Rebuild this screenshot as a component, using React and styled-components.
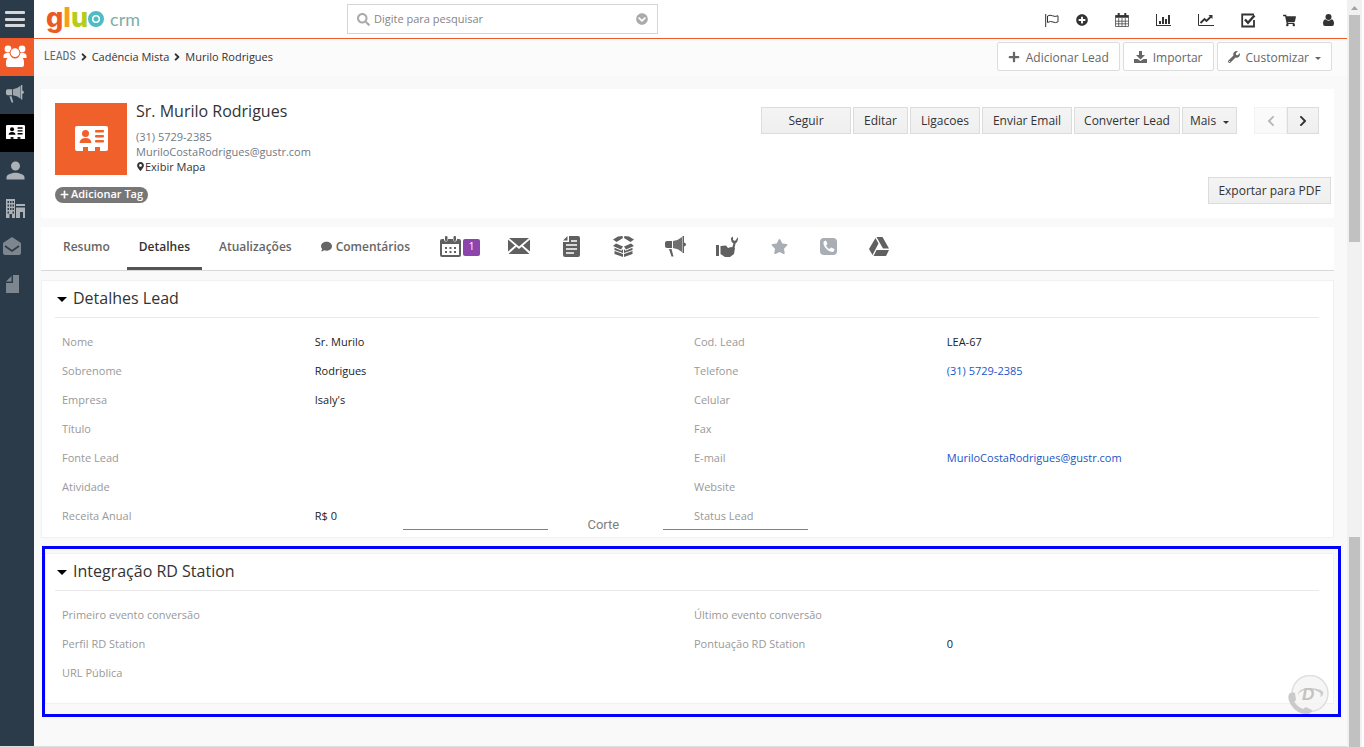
import React from 'react';
import styled, { createGlobalStyle } from 'styled-components';
import {
  FaPlus,
  FaPlusCircle,
  FaShoppingCart,
  FaSearch,
  FaChevronCircleDown,
  FaChevronLeft,
  FaChevronRight,
  FaAngleRight,
  FaWrench,
  FaMapMarkerAlt,
  FaComment,
  FaStar,
} from 'react-icons/fa';
import { MdPerson } from 'react-icons/md';

const GlobalStyle = createGlobalStyle`
  * { box-sizing: border-box; }
  body {
    margin: 0;
    background: #f9f9f9;
    color: #333;
    font-family: "Open Sans", "Noto Sans", sans-serif;
    font-size: 11px;
    line-height: 15px;
  }
  button, input { font-family: inherit; }
  a { color: inherit; text-decoration: none; }
  svg { display: block; flex: none; }
`;

const Page = styled.div`
  display: flex;
  min-height: 100vh;
`;

const Sidebar = styled.nav`
  flex: none;
  width: 34px;
  background: #2c3b49;
  border-bottom: 1px solid #ddd;
`;

const SideItem = styled.a`
  display: flex;
  align-items: center;
  justify-content: ${(p) => (p.$left ? 'flex-start' : 'center')};
  height: 38px;
  padding: 0 4px 2px ${(p) => (p.$left ? '3px' : '0')};
  background: ${(p) => p.$bg || 'transparent'};
  color: ${(p) => p.$color || '#abb1b7'};
`;

const MenuButton = styled.button`
  display: flex;
  align-items: center;
  width: 34px;
  height: 38px;
  padding: 0 0 0 5px;
  border: 0;
  background: transparent;
  color: #d5d8db;
`;

const Main = styled.main`
  flex: 1;
  min-width: 0;
  border-bottom: 1px solid #ddd;
`;

const Header = styled.header`
  display: grid;
  grid-template-columns: 313px minmax(200px, 311px) 1fr;
  align-items: center;
  height: 39px;
  background: #fff;
  border-bottom: 1px solid #f05a28;
`;

const Logo = styled.a`
  display: flex;
  align-items: center;
  padding-left: 12px;
  height: 38px;
`;

const LogoWord = styled.span`
  padding-bottom: 3px;
  font-family: Inter, "Liberation Sans", sans-serif;
  font-size: 27px;
  font-weight: 800;
  line-height: 32px;
  color: #ec5a24;
`;

const LogoLetter = styled.span`
  color: ${(p) => p.$color};
`;

const LogoRing = styled.span`
  flex: none;
  width: 16px;
  height: 16px;
  border: 4px solid #4dbcc4;
  border-radius: 50%;
  background: radial-gradient(#4dbcc4 2px, #fff 3px);
`;

const LogoSub = styled.span`
  margin-left: 6px;
  font-family: Lato, sans-serif;
  font-size: 18px;
  font-weight: 400;
  line-height: 34px;
  color: #7fada7;
`;

const SearchBox = styled.label`
  display: flex;
  align-items: center;
  height: 30px;
  padding: 0 9px;
  border: 1px solid #d5d5d5;
  color: #aaa;
`;

const SearchInput = styled.input`
  flex: 1;
  min-width: 0;
  padding: 0 4px 2px;
  border: 0;
  outline: 0;
  background: transparent;
  font-size: 11px;
  &::placeholder { color: #858585; opacity: 1; }
`;

const HeaderIcons = styled.div`
  display: flex;
  align-items: center;
  justify-content: flex-end;
  gap: 27px;
  padding: 2px 13px 0 0;
`;

const IconGroup = styled.div`
  display: flex;
  align-items: center;
  gap: 17px;
`;

const IconButton = styled.button`
  display: flex;
  padding: 0;
  border: 0;
  background: transparent;
  color: #333;
`;

const SubHeader = styled.div`
  display: flex;
  align-items: flex-start;
  justify-content: space-between;
  height: 37px;
  padding: 3px 15px 0 10px;
  background: #fbfbfb;
`;

const Crumbs = styled.div`
  display: flex;
  align-items: center;
  gap: 2px;
  height: 29px;
`;

const Module = styled.a`
  font-family: "Roboto Condensed", Roboto, sans-serif;
  font-size: 12px;
  color: #5b6875;
`;

const ToolButtons = styled.div`
  display: flex;
  gap: 3px;
`;

const ToolButton = styled.button`
  display: flex;
  align-items: center;
  gap: 6px;
  height: 29px;
  padding: 1px 10px 0;
  border: 1px solid #ddd;
  border-radius: 2px;
  background: #fff;
  color: #666;
  font-size: 12px;
`;

const Caret = styled.span`
  margin-top: 3px;
  border: solid transparent;
  border-width: ${(p) => (p.$big ? '5px 5px 0' : '3px 3px 0')};
  border-top-color: ${(p) => p.$color || '#333'};
`;

const Content = styled.div`
  padding: 13px 0 0 7px;
`;

const Card = styled.section`
  display: flex;
  justify-content: space-between;
  height: 129px;
  margin-right: 13px;
  padding: 14px 3px 0 14px;
  background: #fff;
`;

const Identity = styled.div`
  display: flex;
  gap: 9px;
`;

const Avatar = styled.div`
  display: flex;
  align-items: center;
  justify-content: center;
  width: 72px;
  height: 72px;
  padding-bottom: 2px;
  background: #f0602a;
  color: #fff;
`;

const Name = styled.h1`
  margin: 0 0 10px;
  font-size: 16px;
  font-weight: 400;
  line-height: 16px;
`;

const Contact = styled.a`
  display: flex;
  align-items: center;
  color: ${(p) => (p.$dark ? '#333' : '#6f7a85')};
`;

const TagButton = styled.button`
  display: flex;
  align-items: center;
  gap: 2px;
  height: 16px;
  margin-top: 12px;
  padding: 0 5px 2px;
  border: 0;
  border-radius: 8px;
  background: #777;
  color: #fff;
  font-size: 11px;
  font-weight: 600;
  line-height: 14px;
`;

const Actions = styled.div`
  display: flex;
  flex-direction: column;
  align-items: flex-end;
  gap: 43px;
  padding-top: 4px;
`;

const ActionRow = styled.div`
  display: flex;
  gap: 2px;
  padding-right: 12px;
`;

const ActionButton = styled.button`
  display: flex;
  align-items: center;
  justify-content: center;
  gap: 7px;
  width: ${(p) => p.$w}px;
  height: 27px;
  padding: 0;
  border: 1px solid #dcdcdc;
  background: linear-gradient(#f4f4f4, #efefef);
  color: #333;
  font-size: 12px;
  white-space: nowrap;
  &:disabled { opacity: 0.35; }
`;

const Pager = styled.div`
  display: flex;
  margin-left: 15px;
`;

const TabBar = styled.div`
  display: flex;
  height: 44px;
  margin: 9px 13px 9px 0;
  padding-left: 10px;
  border-bottom: 1px solid #d8d8d8;
  background: #fff;
`;

const Tab = styled.a`
  display: flex;
  align-items: center;
  gap: 4px;
  height: 43px;
  margin-right: 5px;
  padding: 0 12px 4px;
  color: ${(p) => (p.$active ? '#333' : '#666')};
  font-size: 12px;
  font-weight: 600;
  box-shadow: ${(p) => (p.$active ? 'inset 0 -3px #555' : 'none')};
`;

const IconTab = styled.a`
  display: flex;
  align-items: center;
  justify-content: center;
  gap: 2px;
  width: ${(p) => p.$w || 52}px;
  height: 38px;
  color: ${(p) => (p.$muted ? '#a9aeb4' : '#606060')};
`;

const Badge = styled.span`
  width: 17px;
  height: 17px;
  margin-top: 2px;
  border-radius: 2px;
  background: #8e44ad;
  color: #fff;
  font-size: 10px;
  line-height: 14px;
  text-align: center;
`;

const Panel = styled.section`
  position: relative;
  margin-right: ${(p) => (p.$flush ? '0' : '13px')};
  padding: 0 14px ${(p) => (p.$flush ? '16px' : '7px')} ${(p) => (p.$flush ? '9px' : '13px')};
  border: 1px solid #f1f1f1;
  background: #fff;
`;

const PanelTitle = styled.h2`
  display: flex;
  align-items: center;
  gap: 6px;
  height: 37px;
  margin: 0 0 9px;
  padding: 0 0 2px 2px;
  border-bottom: 1px solid #eaeaea;
  font-size: 16px;
  font-weight: 400;
`;

const Fields = styled.table`
  width: 100%;
  table-layout: fixed;
  border-collapse: collapse;
`;

const Label = styled.th`
  width: 20%;
  height: 29px;
  padding: 0 7px;
  color: #999;
  font-weight: 400;
  text-align: left;
`;

const Value = styled.td`
  width: 30%;
  padding: 0 7px;
  color: #222;
`;

const ValueLink = styled.a`
  color: #1a55c8;
`;

const CutMark = styled.div`
  position: absolute;
  bottom: 7px;
  left: 28%;
  display: flex;
  align-items: flex-end;
  gap: 39px;
  color: #808080;
  font-family: Roboto, sans-serif;
  font-size: 13px;
  line-height: 10px;
`;

const CutLabel = styled.span`
  width: 37px;
`;

const CutLine = styled.span`
  width: 145px;
  border-bottom: 1px solid #808080;
`;

const Highlight = styled.div`
  position: relative;
  margin: 8px 6px 29px 1px;
  padding: 4px 4px 10px 0;
  border: 3px solid #0000ff;
`;

const CallWidget = styled.a`
  position: absolute;
  right: 8px;
  bottom: 0;
`;

const Scrollbar = styled.div`
  display: flex;
  flex: none;
  flex-direction: column;
  width: 17px;
  padding: 0 2px;
  border-right: 2px solid #fff;
  background: #f1f1f1;
`;

const ScrollArrow = styled.div`
  width: 7px;
  height: 15px;
  padding-top: 6px;
  margin: 0 2px;
`;

const ScrollPart = styled.div`
  flex: ${(p) => p.$size} 0 0;
  background: ${(p) => (p.$thumb ? '#c1c1c1' : 'transparent')};
`;

const MenuIcon = () => (
  <svg width="20" height="17" viewBox="0 0 20 17" fill="currentColor">
    <rect y="0" width="20" height="3" rx="1" />
    <rect y="7" width="20" height="3" rx="1" />
    <rect y="13" width="20" height="3" rx="1" />
  </svg>
);

const GroupIcon = () => (
  <svg width="24" height="22" viewBox="0 0 24 22" fill="currentColor">
    <circle cx="5" cy="4" r="3.4" />
    <circle cx="19" cy="4" r="3.4" />
    <path d="M0.5 13V10.5Q1 8 4 8H7L9 13ZM23.5 13V10.5Q23 8 20 8H17L15 13Z" />
    <circle cx="12" cy="7.7" r="5.4" fill="#f05a28" />
    <circle cx="12" cy="7.7" r="4.4" />
    <path d="M3 22V17Q3 12 8 12Q12 15 16 12Q21 12 21 17V20Q21 22 19 22H5Q3 22 3 20Z" />
  </svg>
);

const HornIcon = ({ size = 21 }) => (
  <svg width={size} height={size} viewBox="0 0 21 21" fill="currentColor">
    <path d="M2 5H7V12H2Q0 12 0 10V7Q0 5 2 5Z" />
    <path d="M8 5Q13 4.500 17 1V16Q13 12.500 8 12Z" opacity="0.9" />
    <path d="M17.500 0H19V6.500Q21 7 21 8.500T19 10.500V17H17.500Z" />
    <path d="M4 13H6.500L8.500 20.500H6.500Z" />
  </svg>
);

const ContactIcon = ({ width, hole }) => (
  <svg width={width} viewBox="0 0 33 25" fill="currentColor">
    <path d="M2 0H31Q33 0 33 2V23Q33 25 31 25H25V23H20V25H13V23H8V25H2Q0 25 0 23V2Q0 0 2 0Z" />
    <g fill={hole}>
      <circle cx="10.500" cy="7.500" r="3.500" />
      <path d="M4.500 17Q5 12 10.500 12T16.500 17Z" />
      <rect x="20" y="4" width="9" height="2.500" rx="1" />
      <rect x="20" y="9" width="9" height="2.500" rx="1" />
      <rect x="20" y="14" width="9" height="2.500" rx="1" />
      <rect x="8" y="21" width="5" height="2" />
      <rect x="20" y="21" width="5" height="2" />
    </g>
  </svg>
);

const BuildingIcon = () => (
  <svg width="19" height="19" viewBox="0 0 19 19" fill="currentColor">
    <path
      fillRule="evenodd"
      d="M0 0H9V19H6V15H3.500V19H0ZM1.500 2V4H3V2ZM4 2V4H5.500V2ZM6.500 2V4H8V2ZM1.500 5.500V7.500H3V5.500ZM4 5.500V7.500H5.500V5.500ZM6.500 5.500V7.500H8V5.500ZM1.500 9V11H3V9ZM4 9V11H5.500V9ZM6.500 9V11H8V9ZM1.500 12.500V14.500H3V12.500ZM6.500 12.500V14.500H8V12.500Z"
    />
    <path d="M10 5H19V7H10ZM10 8.500H19V19H17V13H14V19H10Z" />
  </svg>
);

const OpenMailIcon = () => (
  <svg width="18" height="18" viewBox="0 0 18 18" fill="none">
    <path d="M9 0L18 6V16Q18 18 16 18H2Q0 18 0 16V6Z" fill="#7d868f" />
    <path d="M2 9L9 14L16 9" stroke="#2c3b49" strokeWidth="1.600" />
  </svg>
);

const FileIcon = () => (
  <svg width="19" height="18" viewBox="0 0 19 18" fill="#7d868f">
    <path d="M7 0H13V18H0V8H7ZM5.500 1V6.500H0Z" />
  </svg>
);

const FlagIcon = () => (
  <svg width="14" height="13" viewBox="0 0 14 13" fill="none" stroke="currentColor">
    <path d="M0.700 0V13" />
    <path d="M2.500 2Q5 0.500 7.500 1.800T13 1.800V7.800Q10.500 9.300 8 8T2.500 8.500Z" />
  </svg>
);

const CalendarIcon = () => (
  <svg width="14" height="14" viewBox="0 0 14 14" fill="none" stroke="currentColor">
    <path d="M0.500 2.500H13.500V13.500H0.500ZM0.500 8.200H13.500M0.500 10.800H13.500M3.700 5V13.500M7 5V13.500M10.300 5V13.500" strokeWidth="0.700" />
    <path d="M0.500 3.500H13.500" strokeWidth="2.500" />
    <path d="M3.700 0V3.500M10.300 0V3.500" strokeWidth="2" />
  </svg>
);

const BarChartIcon = () => (
  <svg width="15" height="12" viewBox="0 0 15 12" fill="currentColor">
    <path d="M0 0H1V11H15V12H0ZM3 7H5V10H3ZM6 3H8V10H6ZM9 5H11V10H9ZM12 1H14V10H12Z" />
  </svg>
);

const LineChartIcon = () => (
  <svg width="16" height="12" viewBox="0 0 16 12" fill="none" stroke="currentColor">
    <path d="M0.500 0V11.500H16" />
    <path d="M2.500 9L6.500 5L8.500 7L13 2.500" strokeWidth="1.900" />
    <path d="M10.500 1H14.500V5Z" fill="currentColor" stroke="none" />
  </svg>
);

const CheckIcon = () => (
  <svg width="15" height="15" viewBox="0 0 15 15" fill="none" stroke="currentColor">
    <path d="M13 7V13.500H1.200V1.500H13" strokeWidth="1.800" />
    <path d="M4 6.500L7 9.800L13.500 2.500" strokeWidth="2.400" />
  </svg>
);

const UserIcon = () => (
  <svg width="11" height="12" viewBox="0 0 11 12" fill="currentColor">
    <circle cx="5.500" cy="3" r="3" />
    <path d="M2.300 5.300Q5.500 8 8.700 5.300Q11 6 11 9.500Q11 12 9 12H2Q0 12 0 9.500Q0 6 2.300 5.300Z" />
  </svg>
);

const ImportIcon = () => (
  <svg width="13" height="12" viewBox="0 0 13 12" fill="currentColor">
    <path d="M5 0H8V4H11L6.500 8.500L2 4H5Z" />
    <path d="M0 8H3.500L6.500 10L9.500 8H13V12H0Z" />
  </svg>
);

const EventIcon = () => (
  <svg width="21" height="21" viewBox="0 0 21 21">
    <path d="M2 3H19Q21 3 21 5V19Q21 21 19 21H2Q0 21 0 19V5Q0 3 2 3Z" fill="currentColor" />
    <path d="M2 8H19V19H2Z" fill="#fff" />
    <path d="M4 0H8V4Q6 7 4 4ZM13 0H17V4Q15 7 13 4Z" fill="#fff" />
    <rect x="5" y="0" width="2.500" height="5" rx="1" fill="currentColor" />
    <rect x="13.500" y="0" width="2.500" height="5" rx="1" fill="currentColor" />
    <path d="M5 11H7V13H5ZM9.500 11H11.500V13H9.500ZM14 11H16V13H14ZM5 15H7V17H5ZM9.500 15H11.500V17H9.500ZM14 15H16V17H14Z" fill="currentColor" />
  </svg>
);

const MailIcon = () => (
  <svg width="22" height="16" viewBox="0 0 22 16" fill="currentColor">
    <path d="M1 0H21L11 8.500ZM0 1.500L7 7.500L0 13.500ZM22 1.500V13.500L15 7.500ZM0.500 16L8.300 8.800L11 11L13.700 8.800L21.500 16Z" />
  </svg>
);

const DocIcon = () => (
  <svg width="17" height="21" viewBox="0 0 17 21">
    <path d="M6 0H15Q17 0 17 2V19Q17 21 15 21H2Q0 21 0 19V6H6ZM4.500 0V4.500H0Z" fill="currentColor" />
    <path d="M8 5H14M3 9H14M3 13H14M3 17H11" stroke="#fff" strokeWidth="1.700" />
  </svg>
);

const BoxIcon = () => (
  <svg width="21" height="21" viewBox="0 0 21 21" fill="currentColor">
    <path d="M5 0.500L9.500 0L10 2L3.500 6L0 3.500ZM16 0.500L11.500 0L11 2L17.500 6L21 3.500ZM3 7.500L10 10.500L8 13.500L0 10ZM18 7.500L11 10.500L13 13.500L21 10Z" />
    <path d="M1.500 11.800L8.500 14.800L10 13V17L1.500 14ZM19.500 11.800L12.500 14.800L11 13V17L19.500 14ZM1.500 15L10 18V21L1.500 18ZM19.500 15L11 18V21L19.500 18Z" />
  </svg>
);

const ServiceIcon = () => (
  <svg width="22" height="21" viewBox="0 0 22 21" fill="currentColor">
    <path d="M0 9H3V20H0ZM4.500 10L10 9.500L12 12L15 11L19 12L18 18L14 21H9L4.500 18Z" />
    <path d="M16 12L17.500 7.500Q14.500 5.500 15 2L17 0.500V4L19 5L21 2.500L22 1Q22.500 5 19.500 7.500L18.500 12Z" />
  </svg>
);

const PhoneIcon = () => (
  <svg width="17" height="17" viewBox="0 0 17 17">
    <rect width="17" height="17" rx="4" fill="currentColor" />
    <path d="M3.500 4Q4.500 2.500 6 2.500L7.500 6L6 7.500Q7 10 9.500 11L11 9.500L14.500 11Q14.500 13 13 14Q10 14.700 6.500 11T3.500 4Z" fill="#fff" />
  </svg>
);

const DriveIcon = () => (
  <svg width="20" height="19" viewBox="0 0 20 19" fill="currentColor">
    <path d="M6.500 1L9.500 6.500L3.500 18L0 12ZM7.500 0H13.500L20 11.500H14ZM7.500 13H20L17 19H4.500Z" />
  </svg>
);

const CallIcon = () => (
  <svg width="42" height="39" viewBox="0 0 42 39">
    <circle cx="22" cy="18.500" r="18" fill="#f4f4f4" fillOpacity="0.800" stroke="#dedede" strokeWidth="1.500" />
    <path d="M10 20Q10 13 23 13Q35 14 35.500 18Q35 21 32 22Q34 19 31 17Q27 14 20 14.500Q12 15 10 20Z" fill="#cccccc" />
    <text x="14" y="25" fill="#c2c2c2" fontFamily="Liberation Sans, sans-serif" fontSize="17" fontWeight="700" fontStyle="italic">D</text>
    <path d="M1 19Q4 16 7 18L8 25L6 27Q9 32 15 34L18 32L24 35Q24 38 19 39Q9 39 3 30Q-1 24 1 19Z" fill="#cacaca" />
  </svg>
);

const leadRows = [
  ['Nome', 'Sr. Murilo', 'Cod. Lead', 'LEA-67'],
  ['Sobrenome', 'Rodrigues', 'Telefone', <ValueLink href="tel:3157292385">(31) 5729-2385</ValueLink>],
  ['Empresa', "Isaly's", 'Celular', ''],
  ['Título', '', 'Fax', ''],
  ['Fonte Lead', '', 'E-mail', <ValueLink href="mailto:MuriloCostaRodrigues@gustr.com">MuriloCostaRodrigues@gustr.com</ValueLink>],
  ['Atividade', '', 'Website', ''],
  ['Receita Anual', 'R$ 0', 'Status Lead', ''],
];

const stationRows = [
  ['Primeiro evento conversão', '', 'Último evento conversão', ''],
  ['Perfil RD Station', '', 'Pontuação RD Station', '0'],
  ['URL Pública', '', '', ''],
];

const FieldTable = ({ rows }) => (
  <Fields>
    <tbody>
      {rows.map(([label, value, label2, value2]) => (
        <tr key={label}>
          <Label scope="row">{label}</Label>
          <Value>{value}</Value>
          {label2 ? <Label scope="row">{label2}</Label> : <Value />}
          <Value>{value2}</Value>
        </tr>
      ))}
    </tbody>
  </Fields>
);

const App = () => {
  return (
    <Page>
      <GlobalStyle />
      <Sidebar>
        <MenuButton aria-label="Menu"><MenuIcon /></MenuButton>
        <SideItem href="#" $bg="#f05a28" $color="#fff" aria-label="Marketing"><GroupIcon /></SideItem>
        <SideItem href="#" aria-label="Campanhas"><HornIcon size={18} /></SideItem>
        <SideItem href="#" $bg="#000" $color="#fff" aria-label="Leads"><ContactIcon width="19" hole="#000" /></SideItem>
        <SideItem href="#" aria-label="Contatos"><MdPerson size={27} /></SideItem>
        <SideItem href="#" aria-label="Empresas"><BuildingIcon /></SideItem>
        <SideItem href="#" $left aria-label="E-mails"><OpenMailIcon /></SideItem>
        <SideItem href="#" aria-label="Documentos"><FileIcon /></SideItem>
      </Sidebar>
      <Main>
        <Header>
          <Logo href="#" aria-label="gluo crm">
            <LogoWord>
              g<LogoLetter $color="#f6a01a">l</LogoLetter><LogoLetter $color="#b5cc18">u</LogoLetter>
            </LogoWord>
            <LogoRing />
            <LogoSub>crm</LogoSub>
          </Logo>
          <SearchBox>
            <FaSearch size={13} />
            <SearchInput type="text" aria-label="Pesquisar" placeholder="Digite para pesquisar" />
            <FaChevronCircleDown size={12} />
          </SearchBox>
          <HeaderIcons>
            <IconGroup>
              <IconButton aria-label="Marcar"><FlagIcon /></IconButton>
              <IconButton aria-label="Adicionar"><FaPlusCircle size={12} /></IconButton>
            </IconGroup>
            <IconButton aria-label="Calendário"><CalendarIcon /></IconButton>
            <IconButton aria-label="Relatórios"><BarChartIcon /></IconButton>
            <IconButton aria-label="Gráficos"><LineChartIcon /></IconButton>
            <IconButton aria-label="Tarefas"><CheckIcon /></IconButton>
            <IconButton aria-label="Carrinho"><FaShoppingCart size={13} /></IconButton>
            <IconButton aria-label="Usuário"><UserIcon /></IconButton>
          </HeaderIcons>
        </Header>
        <SubHeader>
          <Crumbs>
            <Module href="#">LEADS</Module>
            <FaAngleRight size={12} />
            <a href="#">Cadência Mista</a>
            <FaAngleRight size={12} />
            <a href="#">Murilo Rodrigues</a>
          </Crumbs>
          <ToolButtons>
            <ToolButton><FaPlus size={12} />Adicionar Lead</ToolButton>
            <ToolButton><ImportIcon />Importar</ToolButton>
            <ToolButton><FaWrench size={12} />Customizar<Caret $color="#666" /></ToolButton>
          </ToolButtons>
        </SubHeader>
        <Content>
          <Card>
            <div>
              <Identity>
                <Avatar><ContactIcon width="33" hole="#f0602a" /></Avatar>
                <div>
                  <Name>Sr. Murilo Rodrigues</Name>
                  <Contact href="tel:3157292385">(31) 5729-2385</Contact>
                  <Contact href="mailto:MuriloCostaRodrigues@gustr.com">MuriloCostaRodrigues@gustr.com</Contact>
                  <Contact $dark href="#"><FaMapMarkerAlt size={9} />Exibir Mapa</Contact>
                </div>
              </Identity>
              <TagButton><FaPlus size={9} />Adicionar Tag</TagButton>
            </div>
            <Actions>
              <ActionRow>
                <ActionButton $w={90}>Seguir</ActionButton>
                <ActionButton $w={55}>Editar</ActionButton>
                <ActionButton $w={70}>Ligacoes</ActionButton>
                <ActionButton $w={90}>Enviar Email</ActionButton>
                <ActionButton $w={106}>Converter Lead</ActionButton>
                <ActionButton $w={55}>Mais<Caret /></ActionButton>
                <Pager>
                  <ActionButton $w={33} disabled aria-label="Anterior"><FaChevronLeft size={12} /></ActionButton>
                  <ActionButton $w={32} aria-label="Próximo"><FaChevronRight size={12} /></ActionButton>
                </Pager>
              </ActionRow>
              <ActionButton $w={123}>Exportar para PDF</ActionButton>
            </Actions>
          </Card>
          <TabBar>
            <Tab href="#">Resumo</Tab>
            <Tab href="#" $active>Detalhes</Tab>
            <Tab href="#">Atualizações</Tab>
            <Tab href="#"><FaComment size={11} />Comentários</Tab>
            <IconTab href="#" $w={66}><EventIcon /><Badge>1</Badge></IconTab>
            <IconTab href="#" aria-label="E-mails"><MailIcon /></IconTab>
            <IconTab href="#" aria-label="Documentos"><DocIcon /></IconTab>
            <IconTab href="#" aria-label="Produtos"><BoxIcon /></IconTab>
            <IconTab href="#" aria-label="Campanhas"><HornIcon /></IconTab>
            <IconTab href="#" aria-label="Serviços"><ServiceIcon /></IconTab>
            <IconTab href="#" $muted aria-label="Favoritos"><FaStar size={17} /></IconTab>
            <IconTab href="#" $muted $w={46} aria-label="Ligações"><PhoneIcon /></IconTab>
            <IconTab href="#" $w={56} aria-label="Google Drive"><DriveIcon /></IconTab>
          </TabBar>
          <Panel>
            <PanelTitle><Caret $big $color="#000" />Detalhes Lead</PanelTitle>
            <FieldTable rows={leadRows} />
            <CutMark>
              <CutLine />
              <CutLabel>Corte</CutLabel>
              <CutLine />
            </CutMark>
          </Panel>
          <Highlight>
            <Panel $flush>
              <PanelTitle><Caret $big $color="#000" />Integração RD Station</PanelTitle>
              <FieldTable rows={stationRows} />
            </Panel>
            <CallWidget href="#" aria-label="Discador"><CallIcon /></CallWidget>
          </Highlight>
        </Content>
      </Main>
      <Scrollbar aria-hidden="true">
        <ScrollArrow>
          <svg width="7" height="4" viewBox="0 0 7 4" fill="#a3a3a3"><path d="M3.500 0L7 4H0Z" /></svg>
        </ScrollArrow>
        <ScrollPart $thumb $size={227} />
        <ScrollPart $size={295} />
        <ScrollPart $thumb $size={210} />
      </Scrollbar>
    </Page>
  );
};

export default App;
